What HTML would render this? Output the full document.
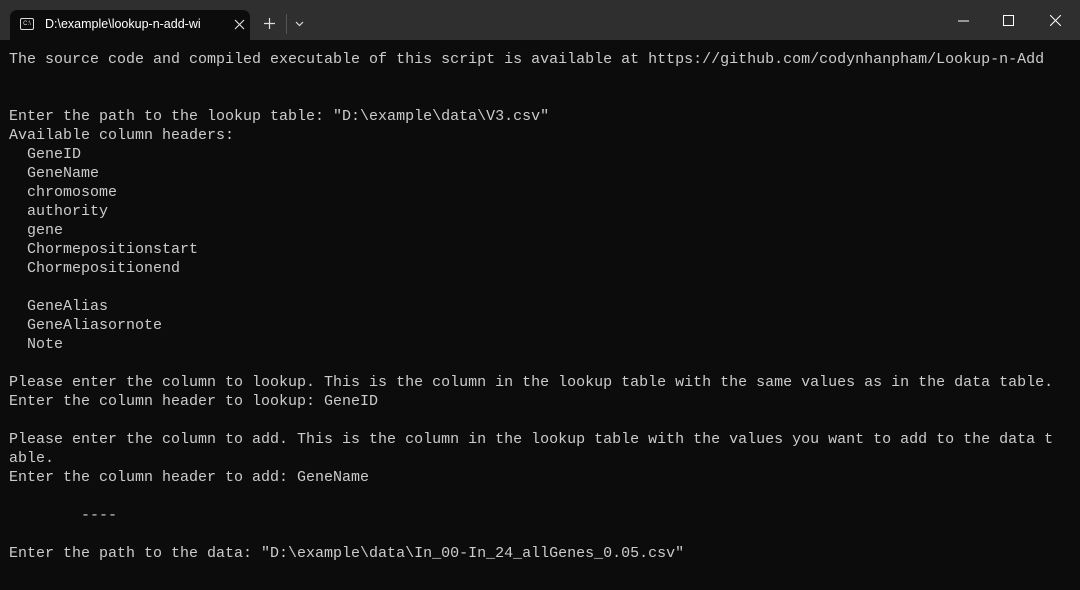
<!DOCTYPE html>
<html><head><style>
body{margin:0;width:1080px;height:590px;background:#0c0c0c;overflow:hidden;font-family:"Liberation Sans",sans-serif}
.bar{position:absolute;left:0;top:0;width:1080px;height:40px;background:#2f2f2f}
.tab{position:absolute;left:10px;top:10px;width:240px;height:30px;background:#0c0c0c;border-radius:7px 7px 0 0}
.tab .t{position:absolute;left:35px;top:7px;color:#fff;font-size:12.5px}
.ic{position:absolute;left:10px;top:8px;width:12px;height:10px;border:1px solid #ddd;border-radius:2px;font-size:6px;color:#ddd;line-height:10px;text-align:center}
pre{position:absolute;left:9px;top:50px;margin:0;font-family:"Liberation Mono",monospace;font-size:15px;line-height:19px;color:#cccccc}
</style></head><body>
<div class="bar"></div>
<div class="tab"><div class="ic">C:\</div><div class="t">D:\example\lookup-n-add-wi</div>
<svg style="position:absolute;left:224px;top:9px" width="11" height="11"><path d="M1 1L10 10M10 1L1 10" stroke="#ddd" stroke-width="1.2"/></svg></div>
<svg style="position:absolute;left:264px;top:18px" width="11" height="11"><path d="M5.5 0V11M0 5.5H11" stroke="#ddd" stroke-width="1.2"/></svg>
<div style="position:absolute;left:286px;top:14px;width:1px;height:20px;background:#555"></div>
<svg style="position:absolute;left:295px;top:21px" width="9" height="6"><path d="M1 1L4.5 4.5L8 1" stroke="#ddd" fill="none" stroke-width="1.2"/></svg>
<svg style="position:absolute;left:958px;top:20px" width="11" height="2"><path d="M0 1H11" stroke="#fff"/></svg>
<svg style="position:absolute;left:1003px;top:15px" width="11" height="11"><rect x="0.5" y="0.5" width="10" height="10" fill="none" stroke="#fff"/></svg>
<svg style="position:absolute;left:1050px;top:15px" width="11" height="11"><path d="M0 0L11 11M11 0L0 11" stroke="#fff"/></svg>
<pre>The source code and compiled executable of this script is available at https://github.com/codynhanpham/Lookup-n-Add


Enter the path to the lookup table: "D:\example\data\V3.csv"
Available column headers:
  GeneID
  GeneName
  chromosome
  authority
  gene
  Chormepositionstart
  Chormepositionend

  GeneAlias
  GeneAliasornote
  Note

Please enter the column to lookup. This is the column in the lookup table with the same values as in the data table.
Enter the column header to lookup: GeneID

Please enter the column to add. This is the column in the lookup table with the values you want to add to the data t
able.
Enter the column header to add: GeneName

        ----

Enter the path to the data: "D:\example\data\In_00-In_24_allGenes_0.05.csv"</pre>
</body></html>
